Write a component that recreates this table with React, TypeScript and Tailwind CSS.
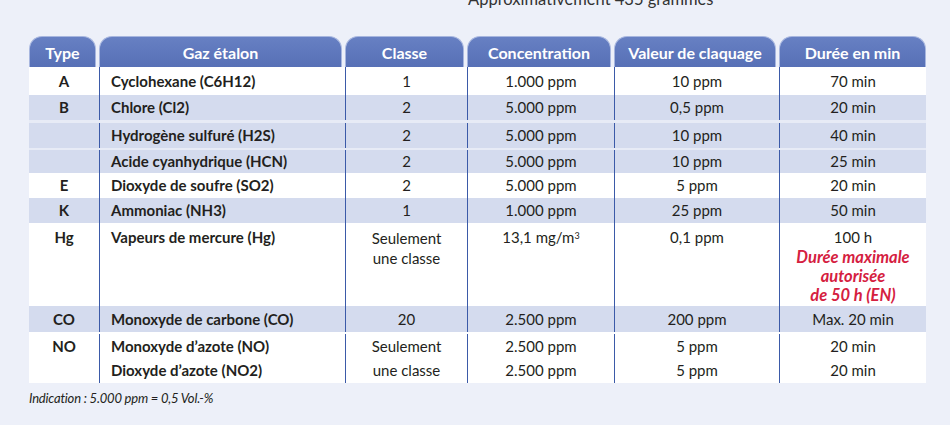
const COLS = 'grid grid-cols-[70px_246px_122px_147px_165px_147px]'

const HEADERS = ['Type', 'Gaz étalon', 'Classe', 'Concentration', 'Valeur de claquage', 'Durée en min']

type Row = {
  type: string
  gaz: string
  classe: string
  conc: string
  val: string
  duree: string
  shaded?: boolean
  sep?: string
  h: string
}

const ROWS: Row[] = [
  { type: 'A', gaz: 'Cyclohexane (C6H12)', classe: '1', conc: '1.000 ppm', val: '10 ppm', duree: '70 min', h: 'h-[28px]' },
  { type: 'B', gaz: 'Chlore (Cl2)', classe: '2', conc: '5.000 ppm', val: '0,5 ppm', duree: '20 min', shaded: true, h: 'h-[25px]' },
  { type: '', gaz: 'Hydrogène sulfuré (H2S)', classe: '2', conc: '5.000 ppm', val: '10 ppm', duree: '40 min', shaded: true, sep: 'border-t-[3px]', h: 'h-[28px]' },
  { type: '', gaz: 'Acide cyanhydrique (HCN)', classe: '2', conc: '5.000 ppm', val: '10 ppm', duree: '25 min', shaded: true, sep: 'border-t-[2px]', h: 'h-[25px]' },
  { type: 'E', gaz: 'Dioxyde de soufre (SO2)', classe: '2', conc: '5.000 ppm', val: '5 ppm', duree: '20 min', h: 'h-[25px]' },
  { type: 'K', gaz: 'Ammoniac (NH3)', classe: '1', conc: '1.000 ppm', val: '25 ppm', duree: '50 min', shaded: true, h: 'h-[25px]' },
]

const cell = 'flex items-center border-l border-[#3b5aa8]'

function SimpleRow({ r }: { r: Row }) {
  return (
    <div
      className={`${COLS} ${r.h} ${r.shaded ? 'bg-[#d4dbee]' : 'bg-white'} ${r.sep ?? ''} border-[#e7ebf6]`}
    >
      <div className="flex items-center justify-center font-bold">{r.type}</div>
      <div className={`${cell} pl-[11px] font-bold`}>{r.gaz}</div>
      <div className={`${cell} justify-center`}>{r.classe}</div>
      <div className={`${cell} justify-center`}>{r.conc}</div>
      <div className={`${cell} justify-center`}>{r.val}</div>
      <div className={`${cell} justify-center`}>{r.duree}</div>
    </div>
  )
}

export default function App() {
  return (
    <div
      className="flex flex-col w-[950px] h-[425px] overflow-hidden bg-[#edf0f9] text-[#231f20]"
      style={{ fontFamily: 'Lato, "Open Sans", sans-serif' }}
    >
      {/* caption of the block above, scrolled mostly out of view */}
      <div className="-mt-[10px] h-[19px] leading-[19px] pl-[468px] text-[16.5px] text-[#333]">
        Approximativement 435 grammes
      </div>

      <div className="mt-[27px] ml-[29px] w-[897px] text-[15px] leading-[19px]">
        <div className={`${COLS} h-[31px]`}>
          {HEADERS.map((h, i) => (
            <div key={h} className={i < HEADERS.length - 1 ? 'pr-[3px]' : ''}>
              <div className="h-full flex items-center justify-center rounded-t-[13px] border border-b-0 border-[#a7b6df] bg-gradient-to-b from-[#6780c3] to-[#5770b6] text-white font-bold text-[16px]">
                {h}
              </div>
            </div>
          ))}
        </div>

        {ROWS.map((r, i) => (
          <SimpleRow key={i} r={r} />
        ))}

        {/* Hg */}
        <div className={`${COLS} h-[83px] bg-white`}>
          <div className="flex justify-center pt-[5px] font-bold">Hg</div>
          <div className="border-l border-[#3b5aa8] pl-[11px] pt-[5px] font-bold">Vapeurs de mercure (Hg)</div>
          <div className="border-l border-[#3b5aa8] pt-[5px] text-center leading-[20px]">
            Seulement
            <br />
            une classe
          </div>
          <div className="border-l border-[#3b5aa8] pt-[5px] text-center">
            13,1 mg/m<sup className="text-[9px]">3</sup>
          </div>
          <div className="border-l border-[#3b5aa8] pt-[5px] text-center">0,1 ppm</div>
          <div className="border-l border-[#3b5aa8] pt-[5px] text-center">
            <div>100 h</div>
            <div className="text-[#d5203f] font-bold italic text-[16.5px] leading-[19px] mt-[1px]">
              Durée maximale
              <br />
              autorisée
              <br />
              de 50 h (EN)
            </div>
          </div>
        </div>

        <SimpleRow
          r={{ type: 'CO', gaz: 'Monoxyde de carbone (CO)', classe: '20', conc: '2.500 ppm', val: '200 ppm', duree: 'Max. 20 min', shaded: true, h: 'h-[26px]' }}
        />

        {/* NO */}
        <div className={`${COLS} h-[51px] bg-white leading-[24px] pt-[2px]`}>
          <div className="text-center font-bold">NO</div>
          <div className="border-l border-[#3b5aa8] pl-[11px] font-bold">
            <div>Monoxyde d’azote (NO)</div>
            <div>Dioxyde d’azote (NO2)</div>
          </div>
          <div className="border-l border-[#3b5aa8] text-center">
            <div>Seulement</div>
            <div>une classe</div>
          </div>
          <div className="border-l border-[#3b5aa8] text-center">
            <div>2.500 ppm</div>
            <div>2.500 ppm</div>
          </div>
          <div className="border-l border-[#3b5aa8] text-center">
            <div>5 ppm</div>
            <div>5 ppm</div>
          </div>
          <div className="border-l border-[#3b5aa8] text-center">
            <div>20 min</div>
            <div>20 min</div>
          </div>
        </div>

        <div className="mt-[6px] text-[13px] italic tracking-[-0.2px] text-[#231f20]">
          Indication : 5.000 ppm = 0,5 Vol.-%
        </div>
      </div>
    </div>
  )
}
